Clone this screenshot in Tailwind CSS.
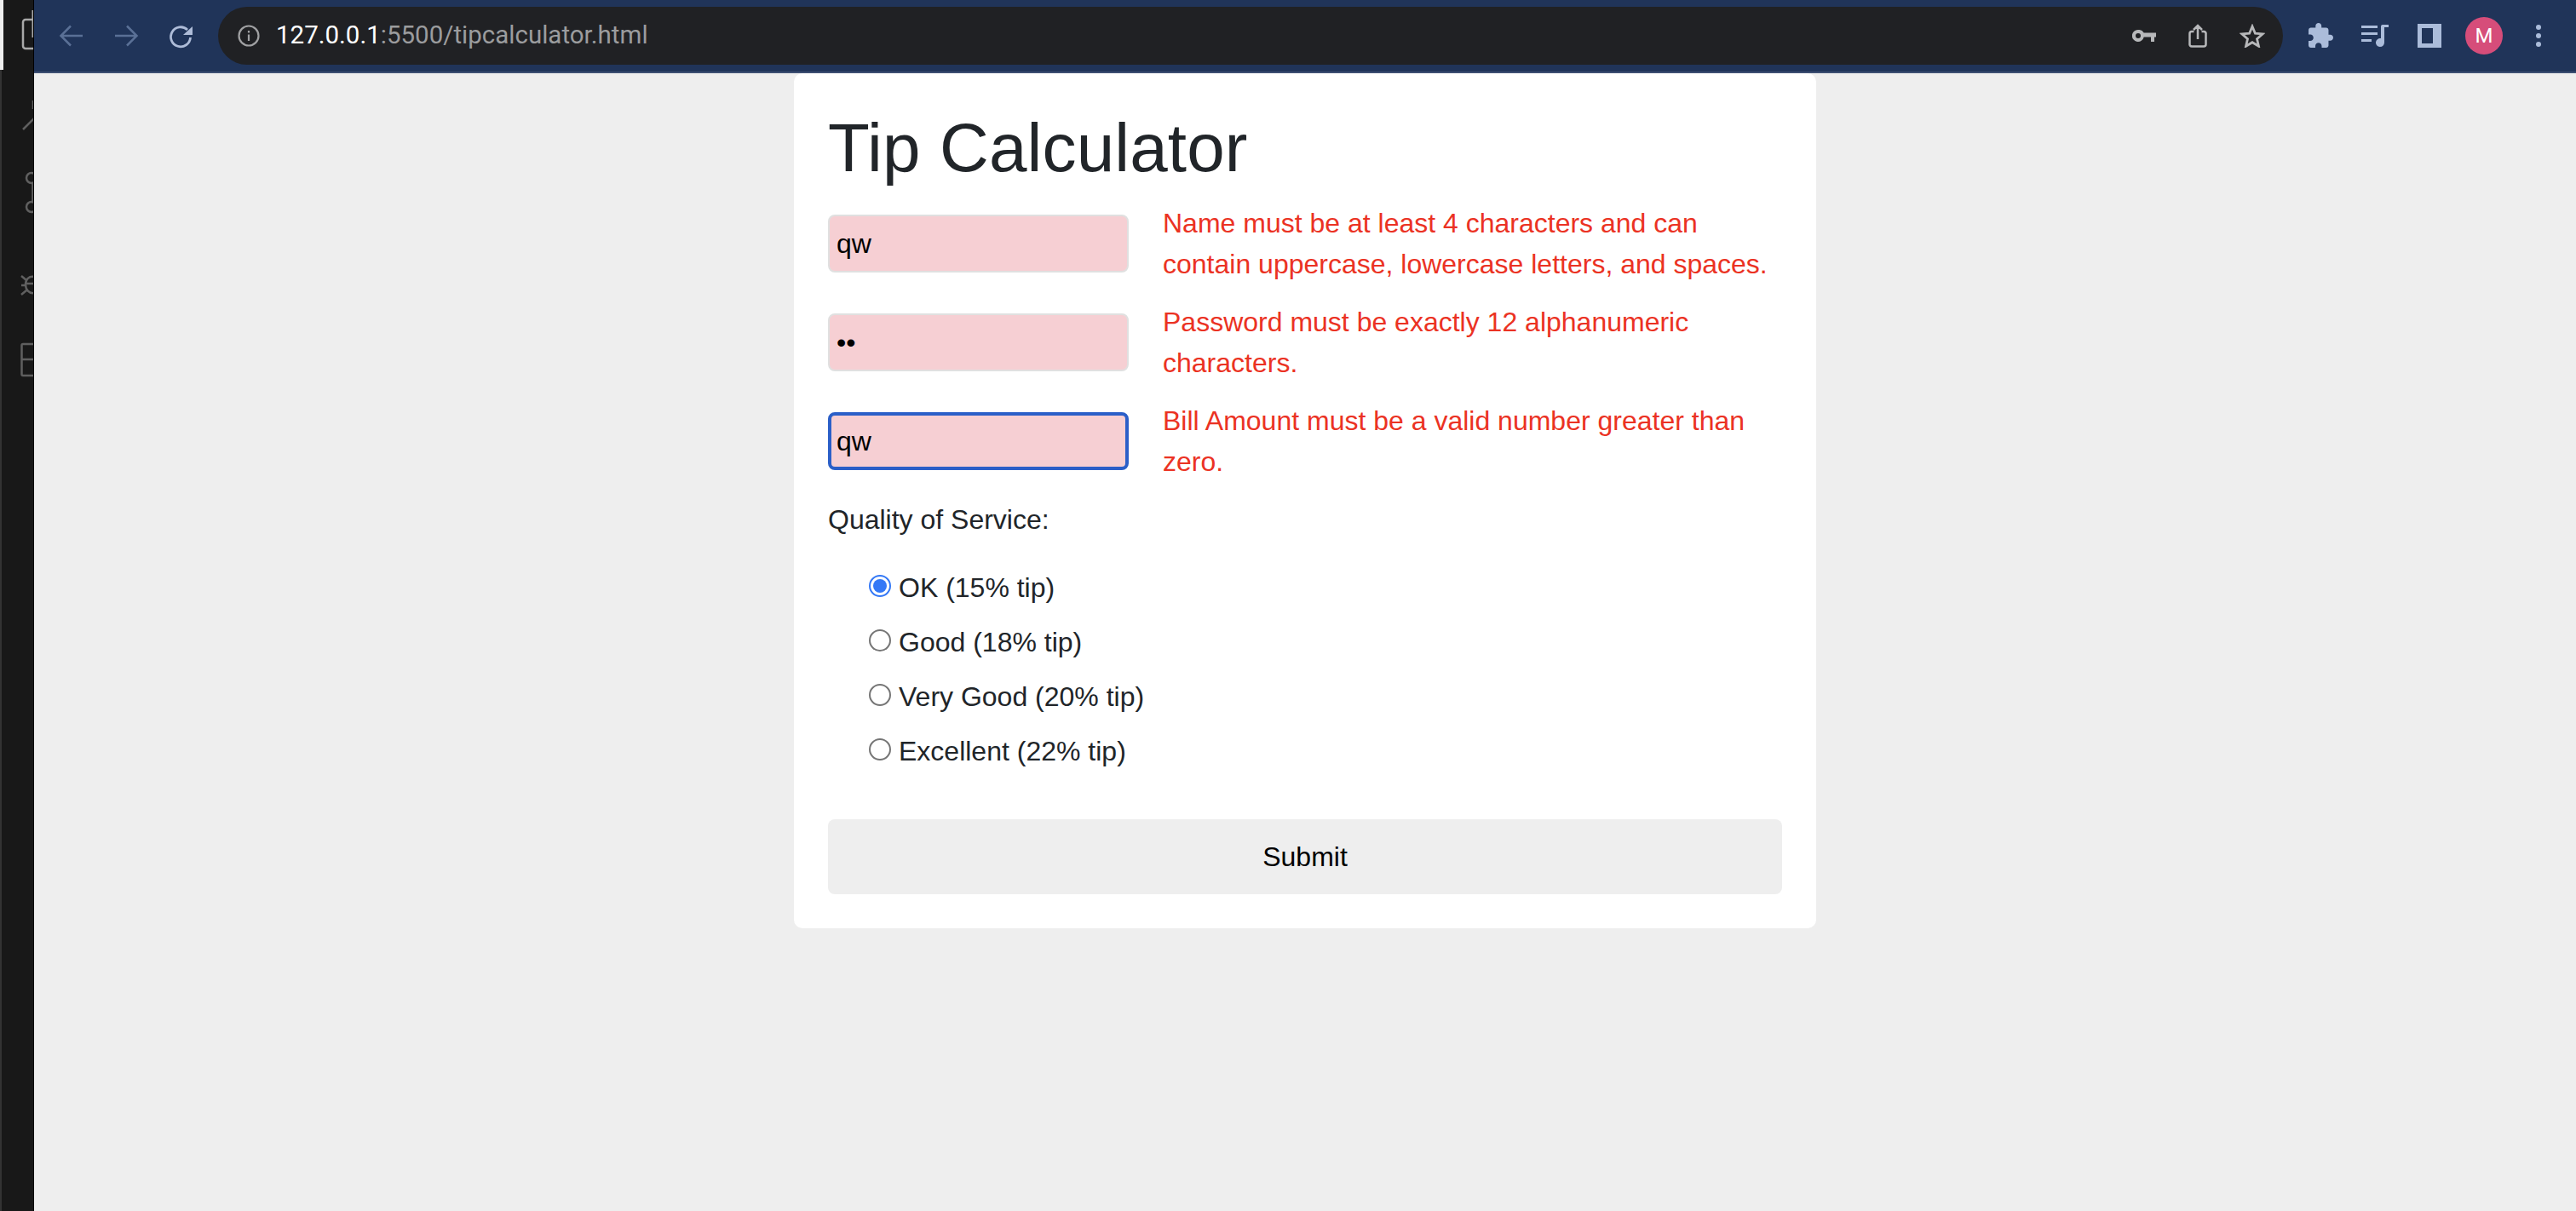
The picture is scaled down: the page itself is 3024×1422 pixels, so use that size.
<!DOCTYPE html>
<html lang="en">
<head>
  <meta charset="UTF-8" />
  <title>Tip Calculator</title>
  <script src="https://cdn.jsdelivr.net/npm/@tailwindcss/browser@4"></script>
</head>
<body class="bg-[#eeeeee] font-['Liberation_Sans',Arial,sans-serif] overflow-hidden">
  <div class="flex h-[1422px] w-[3024px]">

    <!-- editor sidebar peeking out behind the browser -->
    <aside class="relative w-[40px] shrink-0 overflow-hidden bg-[#181818] border-r border-black">
      <div class="absolute left-0 top-0 h-[82px] w-[4px] bg-[#eeeeee]"></div>
      <div class="absolute left-0 top-[82px] bottom-0 w-[2px] bg-[#333333]"></div>
      <svg class="absolute left-0 top-0" width="40" height="460" fill="none" stroke="#5f5f5f" stroke-width="2.5">
        <path d="M39 23H30a3 3 0 0 0-3 3v28a3 3 0 0 0 3 3h10" stroke="#a8a8a8"/>
        <path d="M38.500 12v32" stroke="#a8a8a8" stroke-width="2"/>
        <path d="M27 152l13-13M39 118v10"/>
        <circle cx="37" cy="209" r="6"/>
        <circle cx="37" cy="243" r="6"/>
        <path d="M38.500 215v22"/>
        <path d="M40 325c-6-1-10 3-10 9s4 11 10 10M25 324l6 5M25 335h6M25 346l6-5M31 333h9"/>
        <path d="M40 404H27a1.500 1.500 0 0 0-1.500 1.500v34a1.500 1.500 0 0 0 1.500 1.500h13M26 422h14"/>
      </svg>
    </aside>

    <div class="flex min-w-0 flex-1 flex-col">
      <!-- browser toolbar -->
      <header class="flex h-[86px] shrink-0 items-center border-b-2 border-[#3d4f72] bg-[#203459] pb-[1px]">
        <div class="flex w-[216px] shrink-0 items-center pl-[28px]">
          <svg width="32" height="32" viewBox="0 0 32 32" fill="none" stroke="#5a7096" stroke-width="2.500"><path d="M29 16H4M15 4.500 3.500 16 15 27.500"/></svg>
          <svg class="ml-[32px]" width="32" height="32" viewBox="0 0 32 32" fill="none" stroke="#5a7096" stroke-width="2.500"><path d="M3 16h25M17 4.500 28.500 16 17 27.500"/></svg>
          <svg class="ml-[32px]" width="32" height="32" viewBox="0 0 32 32" fill="none" stroke="#aebcd8" stroke-width="2.800"><path d="M27.500 18A11.500 11.500 0 1 1 24 9"/><path d="M30 5v10H19z" fill="#aebcd8" stroke="none"/></svg>
        </div>
        <div class="flex h-[68px] w-[2424px] shrink-0 items-center rounded-full bg-[#202124] pl-[23px] pr-[21px]">
          <svg width="26" height="26" viewBox="0 0 26 26" fill="none" stroke="#a0a1a3" stroke-width="2.200"><circle cx="13" cy="13" r="11.500"/><path d="M13 11.500v7.500M13 7v2.500"/></svg>
          <span class="ml-[19px] font-['Roboto',sans-serif] text-[29.5px] text-white">127.0.0.1<span class="text-[#9b9c9e]">:5500/tipcalculator.html</span></span>
          <div class="ml-auto flex items-center gap-[38px]">
            <svg width="28" height="14" viewBox="0 0 28 14" fill="#b7b8ba"><path fill-rule="evenodd" d="M7 0a7 7 0 0 1 6.700 3.500H28v5h-2V14h-4V8.500h-8.300A7 7 0 1 1 7 0zm0 4a3 3 0 1 0 0 6 3 3 0 0 0 0-6z"/></svg>
            <svg width="22" height="28" viewBox="0 0 22 28" fill="none" stroke="#b7b8ba" stroke-width="2.500"><path d="M6.500 9H4a2.500 2.500 0 0 0-2.500 2.500v12A2.500 2.500 0 0 0 4 26.500h14a2.500 2.500 0 0 0 2.500-2.500v-12A2.500 2.500 0 0 0 18 9h-2.500M11 18V2M6 7l5-5 5 5"/></svg>
            <svg width="30" height="28" viewBox="0 0 30 28" fill="none" stroke="#b7b8ba" stroke-width="2.800"><path d="M15 3l3.400 8.200 8.800.7-6.700 5.800 2 8.600-7.500-4.600-7.500 4.600 2-8.600-6.700-5.800 8.800-.7z"/></svg>
          </div>
        </div>
        <div class="flex flex-1 items-center pl-[30px]">
          <svg width="29" height="29" viewBox="2 1 21 21" fill="#abbcda"><path d="M20.500 11H19V7c0-1.100-.9-2-2-2h-4V3.500C13 2.120 11.880 1 10.500 1S8 2.120 8 3.500V5H4c-1.100 0-1.990.9-1.990 2v3.800H3.500c1.490 0 2.700 1.210 2.700 2.700s-1.210 2.700-2.700 2.700H2V20c0 1.100.9 2 2 2h3.800v-1.500c0-1.490 1.210-2.700 2.700-2.700 1.490 0 2.700 1.210 2.700 2.700V22H17c1.100 0 2-.9 2-2v-4h1.500c1.380 0 2.500-1.120 2.500-2.500S21.880 11 20.500 11z"/></svg>
          <svg class="ml-[33px]" width="32" height="26" viewBox="0 0 32 26" fill="#abbcda"><path d="M0 1h19v3H0zM0 9h19v3H0zM0 17h12v3H0z"/><path d="M23 2a2 2 0 0 1 2-2h7v3h-5v18a5 5 0 1 1-4-4.900z"/></svg>
          <svg class="ml-[34px]" width="28" height="28" viewBox="0 0 28 28"><rect width="28" height="28" fill="#abbcda"/><rect x="5" y="5" width="13" height="18" fill="#203459"/></svg>
          <div class="ml-[28px] flex h-[44px] w-[44px] items-center justify-center rounded-full bg-[#d64d7a] font-['Roboto',sans-serif] text-[24px] text-white">M</div>
          <svg class="ml-[38px]" width="8" height="28" viewBox="0 0 8 28" fill="#abbcda"><circle cx="4" cy="4" r="3"/><circle cx="4" cy="14" r="3"/><circle cx="4" cy="24" r="3"/></svg>
        </div>
      </header>

      <!-- page -->
      <main class="flex-1">
        <form class="ml-[892px] w-[1200px] rounded-[10px] bg-white p-[40px] text-[32px] leading-[48px] text-[#212529]">
          <h1 class="mb-[16px] text-[80px] leading-[96px] tracking-[0.15px]">Tip Calculator</h1>

          <!-- Name -->
          <div class="mb-[20px] flex items-center">
            <input type="text" value="qw" class="h-[68px] w-[353px] shrink-0 rounded-[8px] border-2 border-[#e0e0e0] bg-[#f6cfd3] px-[8px] text-black" />
            <p class="ml-[40px] text-[#eb3223]">Name must be at least 4 characters and can contain uppercase, lowercase letters, and spaces.</p>
          </div>

          <!-- Password -->
          <div class="mb-[20px] flex items-center">
            <input type="password" value="qw" class="h-[68px] w-[353px] shrink-0 rounded-[8px] border-2 border-[#e0e0e0] bg-[#f6cfd3] px-[8px] text-black" />
            <p class="ml-[40px] text-[#eb3223]">Password must be exactly 12 alphanumeric characters.</p>
          </div>

          <!-- Bill -->
          <div class="mb-[20px] flex items-center">
            <input type="text" value="qw" class="h-[68px] w-[353px] shrink-0 rounded-[8px] border-4 border-[#2b5fc8] bg-[#f6cfd3] px-[6px] text-black" />
            <p class="ml-[40px] text-[#eb3223]">Bill Amount must be a valid number greater than zero.</p>
          </div>

          <p class="mb-[30px]">Quality of Service:</p>

          <div class="ml-[48px] mb-[58px] flex flex-col gap-[16px]">
            <label class="flex h-[48px] items-center gap-[9px]"><input type="radio" name="service" checked class="m-0 h-[26px] w-[26px] appearance-none rounded-full border-2 border-[#3478f6] bg-[#3478f6] bg-clip-content p-[3px]" /><span class="pt-[4px]">OK (15% tip)</span></label>
            <label class="flex h-[48px] items-center gap-[9px]"><input type="radio" name="service" class="m-0 h-[26px] w-[26px] appearance-none rounded-full border-2 border-[#767676] bg-white" /><span class="pt-[4px]">Good (18% tip)</span></label>
            <label class="flex h-[48px] items-center gap-[9px]"><input type="radio" name="service" class="m-0 h-[26px] w-[26px] appearance-none rounded-full border-2 border-[#767676] bg-white" /><span class="pt-[4px]">Very Good (20% tip)</span></label>
            <label class="flex h-[48px] items-center gap-[9px]"><input type="radio" name="service" class="m-0 h-[26px] w-[26px] appearance-none rounded-full border-2 border-[#767676] bg-white" /><span class="pt-[4px]">Excellent (22% tip)</span></label>
          </div>

          <button type="button" class="block h-[88px] w-full rounded-[8px] bg-[#eeeeee] text-black">Submit</button>
        </form>
      </main>
    </div>
  </div>
</body>
</html>
